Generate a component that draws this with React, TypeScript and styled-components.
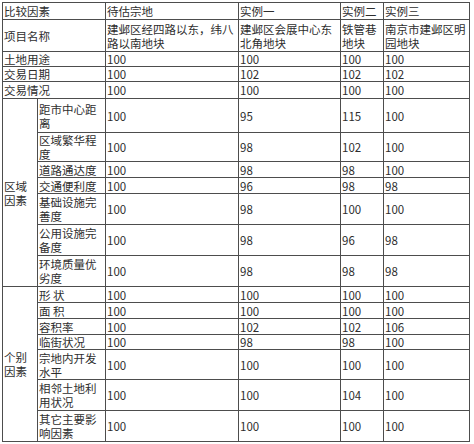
import * as React from 'react';
import styled, { createGlobalStyle } from 'styled-components';

const GlobalStyle = createGlobalStyle`
  html, body {
    margin: 0;
    padding: 0;
    background: #ffffff;
  }
`;

type Row = {
    h: number,
    group?: { label: string, span: number },
    name: string,
    wide?: boolean,
    values: string[],
};

// line breaks follow the reference wrapping
const rows: Row[] = [
    { h: 17, name: '比较因素', wide: true, values: ['待估宗地', '实例一', '实例二', '实例三'] },
    { h: 32, name: '项目名称', wide: true, values: ['建邺区经四路以东，纬八\n路以南地块', '建邺区会展中心东\n北角地块', '铁管巷\n地块', '南京市建邺区明\n园地块'] },
    { h: 14, name: '土地用途', wide: true, values: ['100', '100', '100', '100'] },
    { h: 15, name: '交易日期', wide: true, values: ['100', '102', '102', '102'] },
    { h: 17, name: '交易情况', wide: true, values: ['100', '100', '100', '100'] },
    { h: 34, group: { label: '区域\n因素', span: 7 }, name: '距市中心距\n离', values: ['100', '95', '115', '100'] },
    { h: 28, name: '区域繁华程\n度', values: ['100', '98', '102', '100'] },
    { h: 16, name: '道路通达度', values: ['100', '98', '98', '100'] },
    { h: 16, name: '交通便利度', values: ['100', '96', '98', '98'] },
    { h: 31, name: '基础设施完\n善度', values: ['100', '98', '100', '100'] },
    { h: 31, name: '公用设施完\n备度', values: ['100', '98', '96', '98'] },
    { h: 31, name: '环境质量优\n劣度', values: ['100', '98', '98', '98'] },
    { h: 16, group: { label: '个别\n因素', span: 7 }, name: '形 状', values: ['100', '100', '100', '100'] },
    { h: 16, name: '面 积', values: ['100', '100', '100', '100'] },
    { h: 16, name: '容积率', values: ['100', '102', '102', '106'] },
    { h: 15, name: '临街状况', values: ['100', '98', '98', '100'] },
    { h: 30, name: '宗地内开发\n水平', values: ['100', '100', '100', '100'] },
    { h: 31, name: '相邻土地利\n用状况', values: ['100', '100', '104', '100'] },
    { h: 31, name: '其它主要影\n响因素', values: ['100', '100', '100', '100'] },
];

const colWidths = [35, 68, 133, 102, 43, 86];

const App: React.FC = () => {
    return (
        <Page>
            <GlobalStyle />
            <Table>
                <colgroup>
                    {colWidths.map((w, i) => (
                        <col key={i} style={{ width: w }} />
                    ))}
                </colgroup>
                <tbody>
                    {rows.map((row, i) => (
                        <tr key={i} style={{ height: row.h }}>
                            {row.group && (
                                <Cell rowSpan={row.group.span}>{row.group.label}</Cell>
                            )}
                            <Cell colSpan={row.wide ? 2 : 1}>{row.name}</Cell>
                            {row.values.map((v, j) => (
                                <Cell key={j}>{v}</Cell>
                            ))}
                        </tr>
                    ))}
                </tbody>
            </Table>
        </Page>
    )
}

const Page = styled.div`
  padding: 2px 0 0 2px;
  background: #ffffff;
`;

const Table = styled.table`
  border-collapse: collapse;
  table-layout: fixed;
  width: 468px;
  font-family: "Noto Sans CJK SC", "Noto Sans", sans-serif;
  font-size: 11.5px;
  line-height: 14px;
  color: #2e2e2e;
`;

const Cell = styled.td`
  border: 1px solid #4d4d4d;
  padding: 0 0 0 1px;
  vertical-align: middle;
  text-align: left;
  white-space: pre;
  overflow: hidden;
`;

export default App;
